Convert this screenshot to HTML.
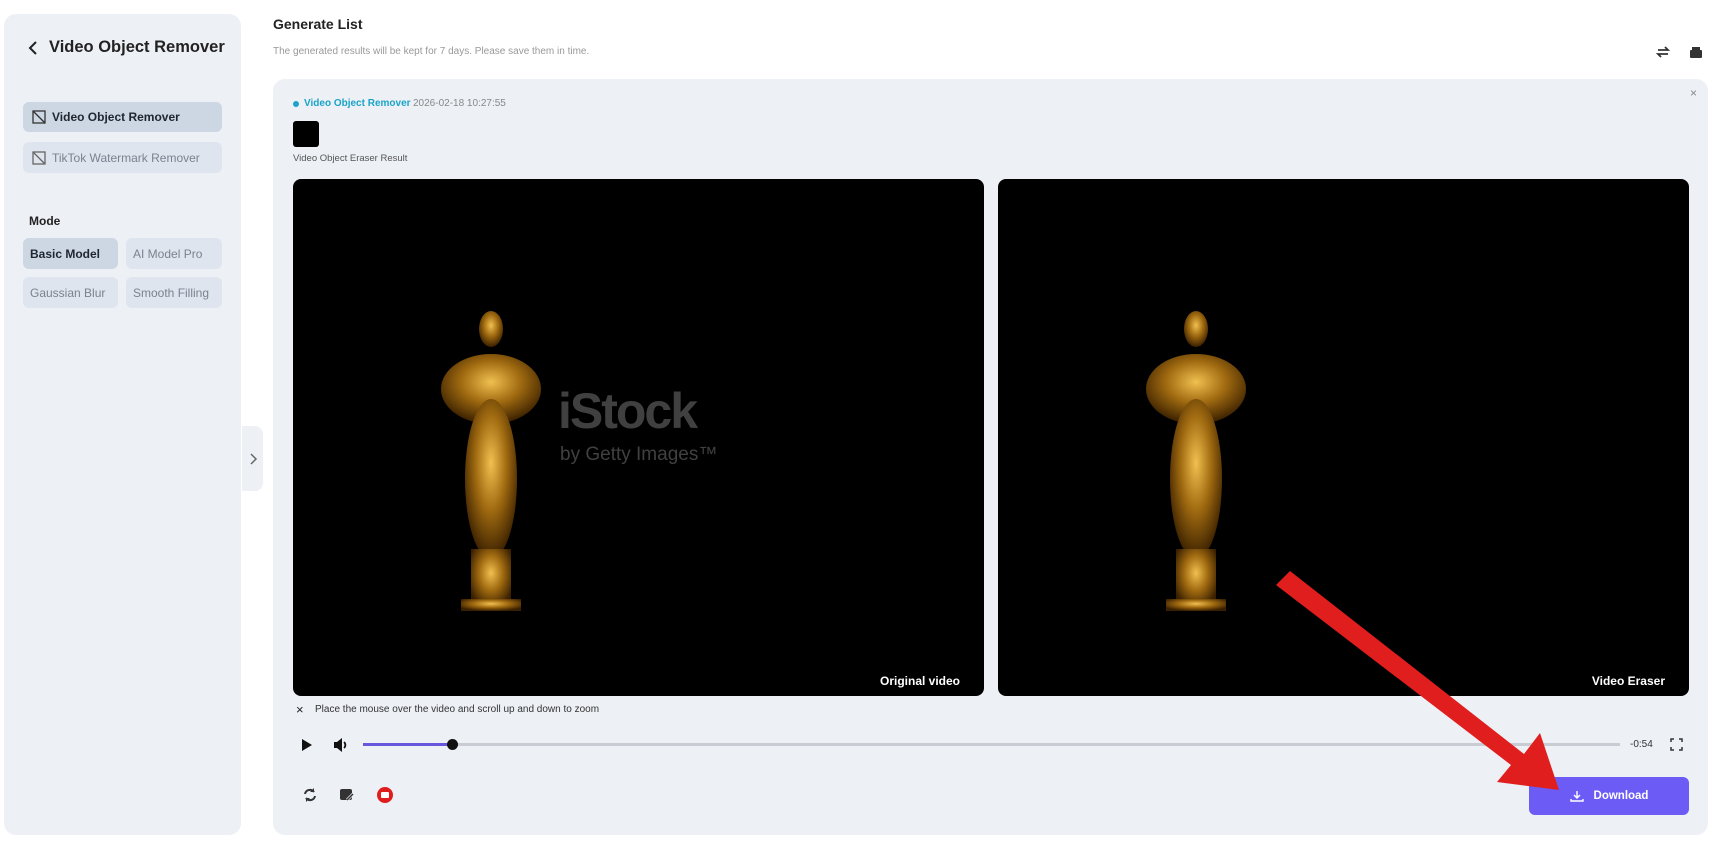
<!DOCTYPE html>
<html><head><meta charset="utf-8"><style>
*{box-sizing:border-box;margin:0;padding:0}
body{width:1715px;height:841px;background:#fff;font-family:"Liberation Sans",sans-serif;position:relative;overflow:hidden;color:#222}
.a{position:absolute}
.side{left:4px;top:14px;width:237px;height:821px;background:#edf0f5;border-radius:12px}
.btn{position:absolute;background:#dfe5ee;border-radius:6px;font-size:12px;color:#7a8290;display:flex;align-items:center;padding-left:7px}
.sel{background:#cdd7e3;color:#1f2630;font-weight:bold}
.card{left:273px;top:79px;width:1435px;height:756px;background:#edf0f5;border-radius:12px}
.vid{background:#000;border-radius:8px;overflow:hidden}
.lab{position:absolute;color:#fff;font-size:12px;font-weight:bold}
</style></head><body>
<div class="a side"></div>
<svg class="a" style="left:27px;top:40px" width="14" height="16" viewBox="0 0 14 16"><path d="M9 2L3 8l6 6" stroke="#222" stroke-width="2" fill="none"/></svg>
<div class="a" style="left:49px;top:38px;font-size:16.5px;font-weight:bold;color:#222">Video Object Remover</div>
<div class="btn sel" style="left:23px;top:102px;width:199px;height:30px;padding-left:9px"><svg width="14" height="14" viewBox="0 0 14 14" style="margin-right:6px"><rect x="1" y="1" width="12" height="12" fill="none" stroke="#333" stroke-width="1.3"/><path d="M1 1l12 12" stroke="#333" stroke-width="1.3"/></svg>Video Object Remover</div>
<div class="btn" style="left:23px;top:142px;width:199px;height:31px;padding-left:9px"><svg width="14" height="14" viewBox="0 0 14 14" style="margin-right:6px"><rect x="1" y="1" width="12" height="12" fill="none" stroke="#666" stroke-width="1.3"/><path d="M1 1l12 12M5 5l4 4" stroke="#666" stroke-width="1.3"/></svg>TikTok Watermark Remover</div>
<div class="a" style="left:29px;top:214px;font-size:12px;font-weight:bold">Mode</div>
<div class="btn sel" style="left:23px;top:238px;width:95px;height:31px">Basic Model</div>
<div class="btn" style="left:126px;top:238px;width:96px;height:31px">AI Model Pro</div>
<div class="btn" style="left:23px;top:277px;width:95px;height:31px">Gaussian Blur</div>
<div class="btn" style="left:126px;top:277px;width:96px;height:31px">Smooth Filling</div>
<div class="a" style="left:242px;top:426px;width:21px;height:65px;background:#edf0f5;border-radius:0 8px 8px 0"></div>
<svg class="a" style="left:248px;top:453px" width="10" height="12"><path d="M3 1l5 5-5 5" stroke="#666" stroke-width="1.5" fill="none"/></svg>

<div class="a" style="left:273px;top:16px;font-size:14px;font-weight:bold">Generate List</div>
<div class="a" style="left:273px;top:46px;font-size:10px;color:#999">The generated results will be kept for 7 days. Please save them in time.</div>
<svg class="a" style="left:1655px;top:44px" width="16" height="16" viewBox="0 0 16 16"><path d="M3 6h10l-3-3M13 10H3l3 3" stroke="#333" stroke-width="1.8" fill="none"/></svg>
<svg class="a" style="left:1688px;top:44px" width="16" height="16" viewBox="0 0 16 16"><rect x="2" y="6" width="12" height="8" rx="1" fill="#333"/><rect x="4" y="3" width="8" height="3" fill="#333"/></svg>

<div class="a card"></div>
<div class="a" style="left:1690px;top:86px;font-size:12px;color:#888">×</div>
<div class="a" style="left:293px;top:101px;width:6px;height:6px;border-radius:50%;background:#1aa3c8"></div>
<div class="a" style="left:304px;top:98px;font-size:10px;font-weight:bold;color:#1aa3c8">Video Object Remover</div>
<div class="a" style="left:413px;top:98px;font-size:10px;color:#888">2026-02-18 10:27:55</div>
<div class="a" style="left:293px;top:121px;width:26px;height:26px;background:#000;border-radius:3px"></div>
<div class="a" style="left:293px;top:153px;font-size:9.5px;color:#555">Video Object Eraser Result</div>

<div class="a vid" style="left:293px;top:179px;width:691px;height:517px">
<svg width="691" height="517" style="position:absolute;left:0;top:0"><defs><radialGradient id="g" cx="50%" cy="40%" r="60%"><stop offset="0" stop-color="#f0c050"/><stop offset=".5" stop-color="#a06a10"/><stop offset="1" stop-color="#3a2000"/></radialGradient></defs>
<g fill="url(#g)" transform="translate(128,120)"><ellipse cx="70" cy="30" rx="12" ry="18"/><ellipse cx="70" cy="90" rx="50" ry="35"/><ellipse cx="70" cy="180" rx="26" ry="80"/><rect x="50" y="250" width="40" height="60"/><rect x="40" y="300" width="60" height="12"/></g>
<text x="265" y="249" font-size="50" font-weight="bold" fill="#6a6a6a" fill-opacity=".6" font-family="Liberation Sans" letter-spacing="-2">iStock</text>
<text x="267" y="281" font-size="19" fill="#6a6a6a" fill-opacity=".6" font-family="Liberation Sans">by Getty Images™</text></svg>
<div class="lab" style="right:24px;bottom:8px">Original video</div></div>
<div class="a vid" style="left:998px;top:179px;width:691px;height:517px">
<svg width="691" height="517" style="position:absolute;left:0;top:0"><g fill="url(#g)" transform="translate(128,120)"><ellipse cx="70" cy="30" rx="12" ry="18"/><ellipse cx="70" cy="90" rx="50" ry="35"/><ellipse cx="70" cy="180" rx="26" ry="80"/><rect x="50" y="250" width="40" height="60"/><rect x="40" y="300" width="60" height="12"/></g></svg>
<div class="lab" style="right:24px;bottom:8px">Video Eraser</div></div>

<div class="a" style="left:296px;top:702px;font-size:13px;color:#222">×</div>
<div class="a" style="left:315px;top:704px;font-size:10px;color:#333">Place the mouse over the video and scroll up and down to zoom</div>
<svg class="a" style="left:300px;top:738px" width="14" height="14"><path d="M2 1l10 6-10 6z" fill="#111"/></svg>
<svg class="a" style="left:332px;top:737px" width="18" height="16" viewBox="0 0 18 16"><path d="M2 5h3l5-4v14l-5-4H2z" fill="#111"/><path d="M12 5a4 4 0 010 6" stroke="#111" stroke-width="1.8" fill="none"/></svg>
<div class="a" style="left:363px;top:743px;width:1257px;height:3px;background:#c9ccd2"></div>
<div class="a" style="left:363px;top:743px;width:90px;height:3px;background:#6657dd"></div>
<div class="a" style="left:447px;top:739px;width:11px;height:11px;border-radius:50%;background:#111"></div>
<div class="a" style="left:1630px;top:739px;font-size:10px;color:#333">-0:54</div>
<svg class="a" style="left:1670px;top:738px" width="13" height="13"><path d="M1 4V1h3M9 1h3v3M12 9v3H9M4 12H1V9" stroke="#333" stroke-width="1.5" fill="none"/></svg>
<svg class="a" style="left:302px;top:787px" width="16" height="16" viewBox="0 0 16 16"><path d="M3 7a5 5 0 019-2M13 9a5 5 0 01-9 2" stroke="#333" stroke-width="2" fill="none"/><path d="M12 1v4H8M4 15v-4h4" fill="#333"/></svg>
<svg class="a" style="left:339px;top:787px" width="16" height="16"><rect x="1" y="2" width="12" height="11" rx="2" fill="#333"/><path d="M8 13l6-6" stroke="#edf0f5" stroke-width="3"/><path d="M8 13l6-6" stroke="#333" stroke-width="1.5"/></svg>
<div class="a" style="left:377px;top:787px;width:16px;height:16px;border-radius:50%;background:#e01d1d"></div>
<div class="a" style="left:381px;top:792px;width:8px;height:6px;border-radius:1px;background:#fff"></div>
<div class="a" style="left:1529px;top:777px;width:160px;height:38px;background:#6c5cf5;border-radius:6px;color:#fff;font-size:11.5px;font-weight:bold;display:flex;align-items:center;justify-content:center"><svg width="14" height="12" style="margin-right:10px" viewBox="0 0 14 12"><path d="M7 1v6M4 5l3 3 3-3M1 9v2h12V9" stroke="#fff" stroke-width="1.4" fill="none"/></svg>Download</div>
<svg class="a" style="left:0;top:0" width="1715" height="841"><path d="M1276 585L1290 571L1524 754L1540 733L1559 790L1497 782L1511 765Z" fill="#e01e1e"/></svg>
</body></html>
